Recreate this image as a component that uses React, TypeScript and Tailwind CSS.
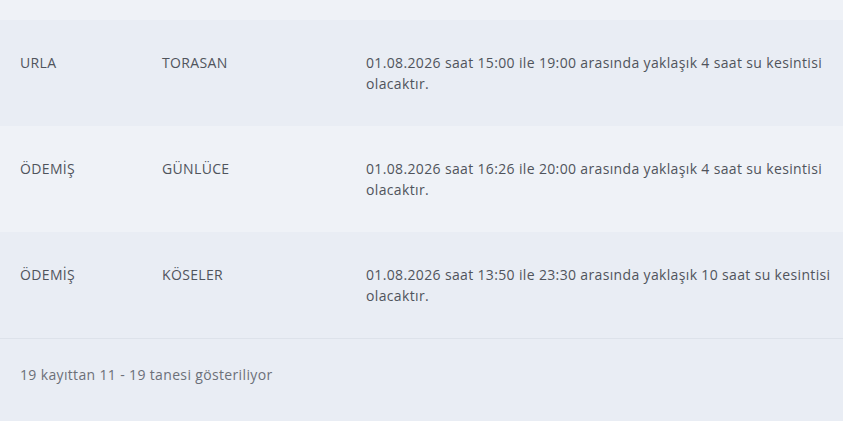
import React from 'react';

interface Outage {
    district: string;
    area: string;
    message: string;
}

const outages: Outage[] = [
    {
        district: "URLA",
        area: "TORASAN",
        message: "01.08.2026 saat 15:00 ile 19:00 arasında yaklaşık 4 saat su kesintisi olacaktır.",
    },
    {
        district: "ÖDEMİŞ",
        area: "GÜNLÜCE",
        message: "01.08.2026 saat 16:26 ile 20:00 arasında yaklaşık 4 saat su kesintisi olacaktır.",
    },
    {
        district: "ÖDEMİŞ",
        area: "KÖSELER",
        message: "01.08.2026 saat 13:50 ile 23:30 arasında yaklaşık 10 saat su kesintisi olacaktır.",
    },
];

export default function App() {
    return (
        <div className="min-h-screen w-full bg-[#e9edf4] font-['Open_Sans','Noto_Sans',sans-serif] text-[14px] tracking-[0.35px] text-[#50545c]">
            {/* tail of the previous row */}
            <div className="h-[20px] bg-[#eff2f7]" />
            <table className="w-full table-fixed border-collapse">
                <tbody>
                    {outages.map((o, i) => (
                        <tr
                            key={i}
                            className={i % 2 === 0 ? "bg-[#e9edf4]" : "bg-[#eff2f7]"}
                        >
                            <td className="w-[162px] align-top pl-5 py-8 leading-[21px]">{o.district}</td>
                            <td className="w-[204px] align-top py-8 leading-[21px]">{o.area}</td>
                            <td className="align-top py-8 pr-2 leading-[21px]">{o.message}</td>
                        </tr>
                    ))}
                </tbody>
            </table>
            <div className="border-t border-[#dde2ea] px-5 pt-[25px] text-[#6c7079] leading-[21px]">
                19 kayıttan 11 - 19 tanesi gösteriliyor
            </div>
        </div>
    );
}
